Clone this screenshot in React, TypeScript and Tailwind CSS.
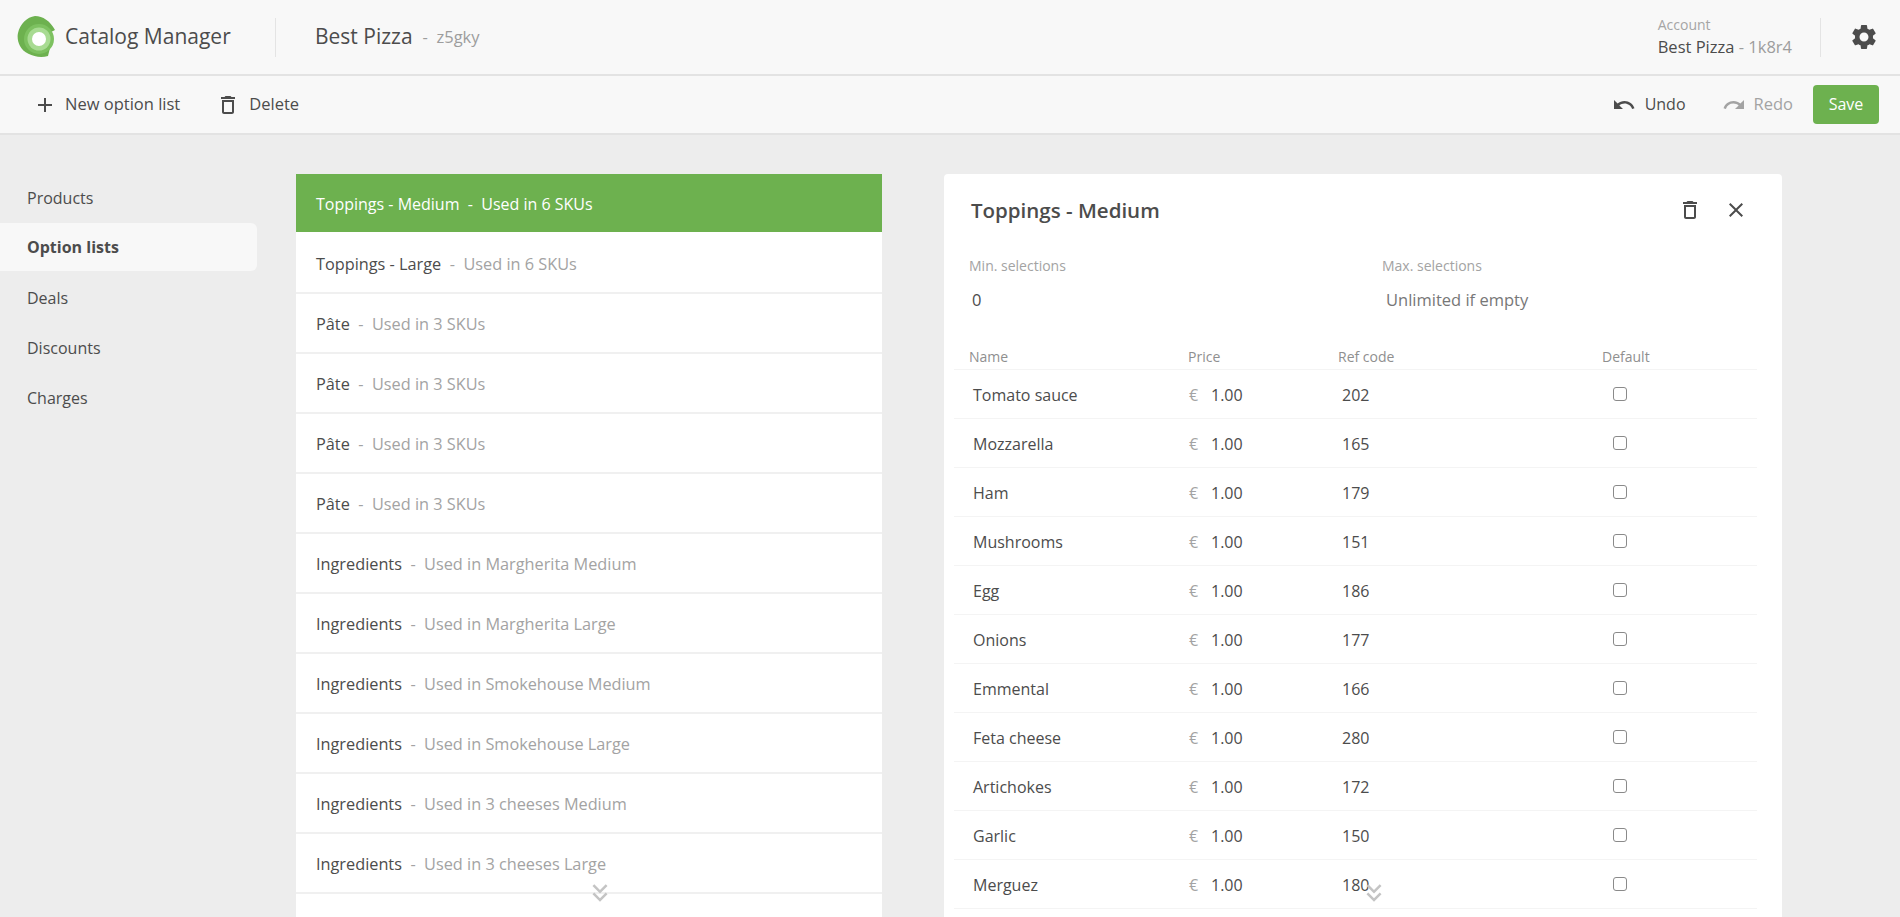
import { MdAdd, MdClose, MdDeleteOutline, MdKeyboardDoubleArrowDown, MdRedo, MdSettings, MdUndo } from "react-icons/md";

const lists = [
  { name: "Toppings - Large", used: "Used in 6 SKUs" },
  { name: "Pâte", used: "Used in 3 SKUs" },
  { name: "Pâte", used: "Used in 3 SKUs" },
  { name: "Pâte", used: "Used in 3 SKUs" },
  { name: "Pâte", used: "Used in 3 SKUs" },
  { name: "Ingredients", used: "Used in Margherita Medium" },
  { name: "Ingredients", used: "Used in Margherita Large" },
  { name: "Ingredients", used: "Used in Smokehouse Medium" },
  { name: "Ingredients", used: "Used in Smokehouse Large" },
  { name: "Ingredients", used: "Used in 3 cheeses Medium" },
  { name: "Ingredients", used: "Used in 3 cheeses Large" },
];

const options = [
  ["Tomato sauce", "202"],
  ["Mozzarella", "165"],
  ["Ham", "179"],
  ["Mushrooms", "151"],
  ["Egg", "186"],
  ["Onions", "177"],
  ["Emmental", "166"],
  ["Feta cheese", "280"],
  ["Artichokes", "172"],
  ["Garlic", "150"],
  ["Merguez", "180"],
];

const navItems = ["Products", "Option lists", "Deals", "Discounts", "Charges"];

function Logo() {
  return (
    <svg width="38" height="42" viewBox="0 0 38 42" className="shrink-0">
      <path d="M1 17 C3 8 10 1 18 0 C26 0 33 5 38 14 L32 17 C35 22 35 28 33 32 L31 40 C20 43 7 38 3 30 C1 26 0 21 1 17 Z" fill="#6db14f" />
      <circle cx="22" cy="23" r="15" fill="#7dc160" />
      <circle cx="22" cy="23" r="11.500" fill="#a8db92" />
      <circle cx="22" cy="23" r="7" fill="#ffffff" />
    </svg>
  );
}

function Divider() {
  return <div className="h-[39px] w-px bg-[#e4e4e4]" />;
}

export default function App() {
  return (
    <div className="flex h-screen flex-col overflow-hidden bg-[#ededed] font-['Open_Sans',sans-serif] text-[#4c4c4c]">
      <header className="flex h-[76px] shrink-0 items-center border-b-2 border-[#e3e3e3] bg-[#f8f8f8] pr-[21px] pl-[17px]">
        <Logo />
        <span className="ml-[10px] w-[210px] text-[21px]">Catalog Manager</span>
        <Divider />
        <span className="ml-[39px] text-[21px]">Best Pizza</span>
        <span className="ml-[10px] text-[16.5px] text-[#9d9d9d]">-&nbsp; z5gky</span>
        <div className="mr-[28px] ml-auto flex flex-col">
          <span className="text-[14px] leading-[20px] text-[#a5a5a5]">Account</span>
          <span className="text-[16.5px] leading-[24px] whitespace-nowrap">
            Best Pizza <span className="text-[#9d9d9d]">- 1k8r4</span>
          </span>
        </div>
        <Divider />
        <MdSettings className="mb-[1px] ml-[28px] text-[#4c4c4c]" size={30} />
      </header>

      <div className="flex h-[59px] shrink-0 items-center border-b-2 border-[#e3e3e3] bg-[#f8f8f8] pr-[21px] pl-[33px] text-[16.5px]">
        <MdAdd size={24} className="mr-[8px]" />
        <span>New option list</span>
        <MdDeleteOutline size={24} className="mr-[9px] ml-[36px]" />
        <span>Delete</span>
        <MdUndo size={24} className="mr-[9px] ml-auto" />
        <span className="-mt-[1px] text-[16px]">Undo</span>
        <MdRedo size={24} className="mr-[8px] ml-[36px] text-[#a3a3a3]" />
        <span className="text-[#a3a3a3]">Redo</span>
        <button className="ml-[20px] h-[39px] w-[66px] rounded bg-[#6db14f] pb-[1px] text-[16px] text-white">Save</button>
      </div>

      <div className="flex min-h-0 flex-1">
        <nav className="mt-[38px] flex w-[257px] shrink-0 flex-col text-[16px]">
          {navItems.map((item) => (
            <div
              key={item}
              className={
                item === "Option lists"
                  ? "mb-[2px] flex h-[48px] items-center rounded-r-md bg-[#f8f8f8] pl-[27px] font-bold"
                  : "flex h-[50px] items-center pl-[27px]"
              }
            >
              {item}
            </div>
          ))}
        </nav>

        <div className="relative mt-[39px] ml-[39px] w-[586px] shrink-0">
          <div className="flex h-[60px] items-center border-b-2 border-white bg-[#6db14f] px-[20px] pt-[1px] text-[16px] text-white">
            Toppings - Medium&nbsp; -&nbsp; Used in 6 SKUs
          </div>
          {lists.map((list, i) => (
            <div key={i} className="flex h-[60px] items-center border-b-2 border-[#f0f0f0] bg-white px-[20px] pt-[2px] text-[16.3px]">
              {list.name}
              <span className="text-[#a3a3a3]">&nbsp; -&nbsp; {list.used}</span>
            </div>
          ))}
          <div className="h-[60px] bg-white" />
          <MdKeyboardDoubleArrowDown size={30} className="absolute top-[704px] left-[289px] text-[#c4c4c4]" />
        </div>

        <div className="relative mt-[39px] ml-[62px] flex w-[838px] shrink-0 flex-col rounded-t bg-white pr-[25px] pl-[10px]">
          <div className="flex h-[72px] shrink-0 items-center pr-[9px] pl-[17px]">
            <h1 className="text-[20.5px] font-semibold">Toppings - Medium</h1>
            <MdDeleteOutline size={24} className="ml-auto" />
            <MdClose size={24} className="ml-[22px]" />
          </div>

          <div className="flex h-[75px] shrink-0 pt-[9px] pl-[15px]">
            <div className="w-[413px]">
              <div className="text-[14px] text-[#a3a3a3]">Min. selections</div>
              <div className="mt-[12px] pl-[3px] text-[16.5px]">0</div>
            </div>
            <div>
              <div className="text-[14px] text-[#a3a3a3]">Max. selections</div>
              <div className="mt-[12px] pl-[4px] text-[16.5px] text-[#777]">Unlimited if empty</div>
            </div>
          </div>

          <div className="mt-[25px] flex h-[24px] shrink-0 border-b border-[#f4f4f4] pl-[15px] text-[14px] text-[#8f8f8f]">
            <span className="w-[219px]">Name</span>
            <span className="w-[150px]">Price</span>
            <span className="w-[264px]">Ref code</span>
            <span>Default</span>
          </div>

          {options.map(([name, code]) => (
            <div key={name} className="flex h-[49px] shrink-0 items-center border-b border-[#f4f4f4] pt-[2px] pl-[19px] text-[16px]">
              <span className="w-[216px]">{name}</span>
              <span className="w-[22px] text-[#a3a3a3]">€</span>
              <span className="w-[131px]">1.00</span>
              <span className="w-[271px]">{code}</span>
              <input type="checkbox" className="-mt-[2px] size-[14px] appearance-none rounded-[3px] border border-[#8a8a8a] bg-white" />
            </div>
          ))}
          <MdKeyboardDoubleArrowDown size={30} className="absolute top-[704px] left-[415px] text-[#c4c4c4]" />
        </div>
      </div>
    </div>
  );
}
